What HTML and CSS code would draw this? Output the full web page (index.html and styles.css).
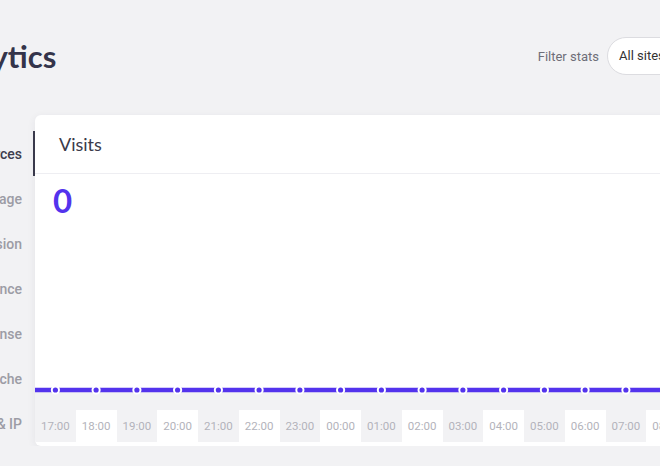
FILE: index.html
```html
<!DOCTYPE html>
<html lang="en">

<head>
    <meta charset="UTF-8">
    <meta name="viewport" content="width=device-width, initial-scale=1.0">
    <title>Analytics</title>
    <link rel="stylesheet" href="styles.css">
</head>

<body>
    <div class="page">
        <!-- Page header -->
        <header class="top">
            <h1>Analytics</h1>
            <div class="filter">
                <span class="filter-label">Filter stats</span>
                <div class="pill pill-sites">All sites</div>
                <div class="pill pill-range">Last 24 hours</div>
            </div>
        </header>

        <div class="content">
            <!-- Tabs -->
            <ul class="tabs">
                <li class="active">Resources</li>
                <li>CDN usage</li>
                <li>Dispersion</li>
                <li>Performance</li>
                <li>Response</li>
                <li>Cache</li>
                <li>Geo &amp; IP</li>
            </ul>

            <!-- Visits card -->
            <section class="card">
                <div class="card-head">Visits</div>
                <div class="plot">
                    <div class="big-num">0</div>
                </div>
                <svg class="line" width="978" height="10" viewBox="0 0 978 10">
                    <line x1="0" y1="5" x2="978" y2="5" stroke="#5333ed" stroke-width="4.5" />
                    <g fill="#5333ed" stroke="#fff" stroke-width="2">
                        <circle cx="20.4" cy="5" r="3.6" />
                        <circle cx="61.1" cy="5" r="3.6" />
                        <circle cx="101.9" cy="5" r="3.6" />
                        <circle cx="142.6" cy="5" r="3.6" />
                        <circle cx="183.4" cy="5" r="3.6" />
                        <circle cx="224.1" cy="5" r="3.6" />
                        <circle cx="264.9" cy="5" r="3.6" />
                        <circle cx="305.6" cy="5" r="3.6" />
                        <circle cx="346.4" cy="5" r="3.6" />
                        <circle cx="387.1" cy="5" r="3.6" />
                        <circle cx="427.9" cy="5" r="3.6" />
                        <circle cx="468.6" cy="5" r="3.6" />
                        <circle cx="509.4" cy="5" r="3.6" />
                        <circle cx="550.1" cy="5" r="3.6" />
                        <circle cx="590.9" cy="5" r="3.6" />
                        <circle cx="631.6" cy="5" r="3.6" />
                        <circle cx="672.4" cy="5" r="3.6" />
                        <circle cx="713.1" cy="5" r="3.6" />
                        <circle cx="753.9" cy="5" r="3.6" />
                        <circle cx="794.6" cy="5" r="3.6" />
                        <circle cx="835.4" cy="5" r="3.6" />
                        <circle cx="876.1" cy="5" r="3.6" />
                        <circle cx="916.9" cy="5" r="3.6" />
                        <circle cx="957.6" cy="5" r="3.6" />
                    </g>
                </svg>
                <div class="axis-gap"></div>
                <div class="hours">
                    <span>17:00</span><span>18:00</span><span>19:00</span><span>20:00</span>
                    <span>21:00</span><span>22:00</span><span>23:00</span><span>00:00</span>
                    <span>01:00</span><span>02:00</span><span>03:00</span><span>04:00</span>
                    <span>05:00</span><span>06:00</span><span>07:00</span><span>08:00</span>
                    <span>09:00</span><span>10:00</span><span>11:00</span><span>12:00</span>
                    <span>13:00</span><span>14:00</span><span>15:00</span><span>16:00</span>
                </div>
            </section>
        </div>
    </div>
</body>

</html>
```

FILE: styles.css
```css
body {
    margin: 0;
    padding: 0;
    background: #f2f2f4;
    font-family: 'Roboto', 'Liberation Sans', sans-serif;
    overflow: hidden;
}

/* page is wider than the window, scrolled a bit to the right */
.page {
    width: 1133px;
    margin-left: -120px;
}

/* Header */
.top {
    display: flex;
    align-items: center;
    padding: 37px 0 0 49px;
}

.top h1 {
    margin: 0;
    font-family: 'Lato', sans-serif;
    font-weight: 700;
    font-size: 31px;
    line-height: 38px;
    color: #34344a;
}

.filter {
    margin-left: auto;
    display: flex;
    align-items: center;
}

.filter-label {
    font-size: 13px;
    color: #6e6e78;
    margin-right: 8px;
}

.pill {
    height: 36px;
    line-height: 36px;
    border: 1px solid #dcdce0;
    border-radius: 19px;
    background: white;
    padding: 0 11px;
    font-size: 13px;
    color: #333;
    box-sizing: content-box;
}

.pill-sites {
    width: 166px;
}

.pill-range {
    width: 182px;
    margin-left: 10px;
}

/* Content: tabs + card */
.content {
    display: flex;
    margin-top: 40px;
}

.tabs {
    list-style: none;
    margin: 0;
    padding: 16px 0 0 0;
    width: 155px;
    flex-shrink: 0;
}

.tabs li {
    height: 45px;
    line-height: 46px;
    text-align: right;
    padding-right: 11px;
    border-right: 2px solid transparent;
    font-size: 14px;
    font-weight: 500;
    color: #9c9ca5;
}

.tabs li.active {
    color: #3d3d4e;
    border-right-color: #3a3a4c;
}

.card {
    width: 978px;
    background: white;
    border-radius: 6px;
    box-shadow: 0 2px 8px rgba(40, 40, 70, 0.07);
    overflow: hidden;
}

.card-head {
    height: 58px;
    line-height: 58px;
    padding-left: 24px;
    border-bottom: 1px solid #eeeef2;
    font-family: 'Lato', sans-serif;
    font-size: 18px;
    color: #3a3a4a;
}

.plot {
    height: 211px;
}

.big-num {
    padding: 6px 0 0 18px;
    font-family: 'Lato', sans-serif;
    font-weight: 700;
    font-size: 33px;
    color: #5333ed;
}

.line {
    display: block;
    background: linear-gradient(#fff 50%, #f2f2f4 50%);
}

.axis-gap {
    height: 15px;
    background: #f2f2f4;
}

.hours {
    display: grid;
    grid-template-columns: repeat(24, 40.75px);
    height: 32px;
}

.hours span {
    line-height: 32px;
    text-align: center;
    font-size: 11.5px;
    color: #b3b3bb;
    background: #f2f2f4;
}

.hours span:nth-child(even) {
    background: white;
}
```
